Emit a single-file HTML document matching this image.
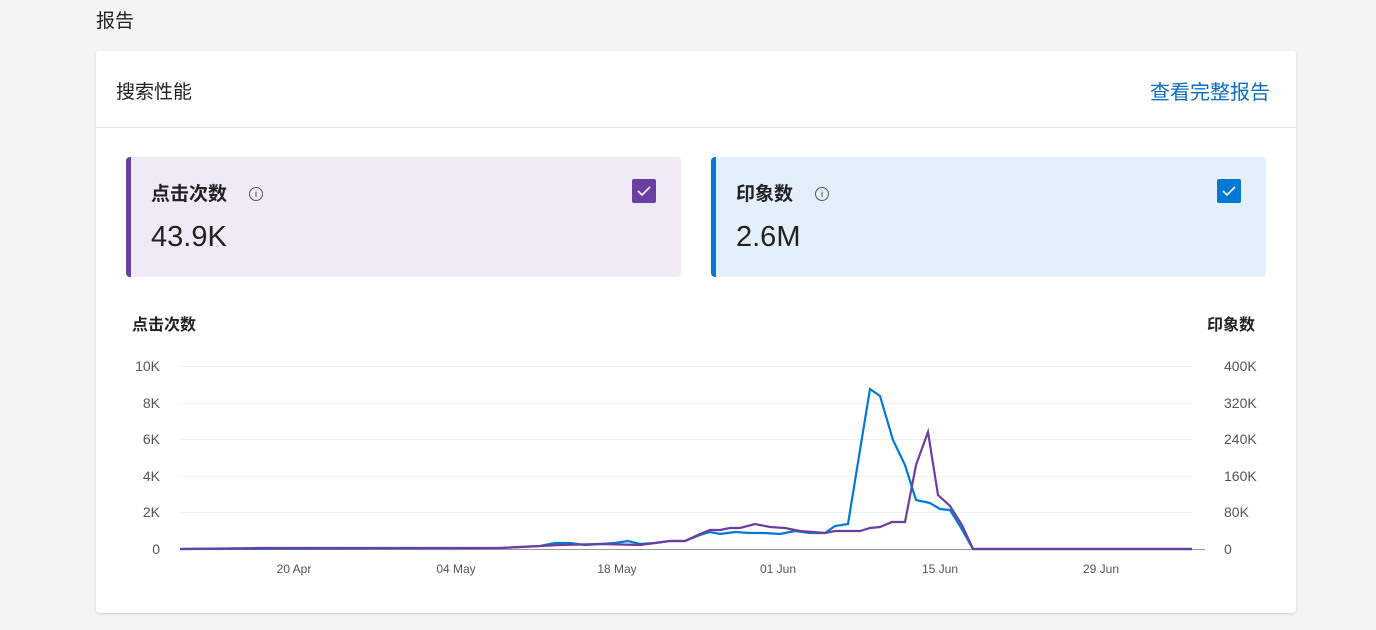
<!DOCTYPE html>
<html><head><meta charset="utf-8"><style>
body{margin:0;width:1376px;height:630px;background:#f4f4f4;font-family:"Liberation Sans","Noto Sans CJK SC",sans-serif;overflow:hidden;position:relative;color:#222}
.t{position:absolute;left:96px;top:6px;font-size:19px;color:#222}
.card{position:absolute;left:96px;top:51px;width:1200px;height:562px;background:#fff;border-radius:3px;box-shadow:0 1px 2px rgba(0,0,0,.15)}
.hd{height:76px;border-bottom:1px solid #e5e5e5;position:relative}
.hd .a{position:absolute;left:20px;top:26px;font-size:19px}
.hd .b{position:absolute;right:26px;top:25px;font-size:20px;color:#0f6cbd}
.m{position:absolute;top:106px;height:120px;border-radius:4px}
.m .l{position:absolute;left:20px;top:22px;font-size:19px;font-weight:bold}
.m .i{display:inline-block;width:12px;height:12px;border:1px solid #555;border-radius:50%;font-size:9px;line-height:12px;text-align:center;margin-left:22px;vertical-align:3px;font-weight:normal}
.m .v{position:absolute;left:20px;top:64px;font-size:29px}
.m .c{position:absolute;right:25px;top:22px;width:24px;height:24px;border-radius:2px}
.ax{position:absolute;font-size:14px;color:#555}
</style></head><body>
<div class="t">报告</div>
<div class="card">
<div class="hd"><span class="a">搜索性能</span><span class="b">查看完整报告</span></div>
<div class="m" style="left:30px;width:550px;background:#f0eaf6;border-left:5px solid #6b3fa0"><div class="l">点击次数<span class="i">i</span></div><div class="v">43.9K</div><div class="c" style="background:#6b3fa0"><svg width="24" height="24"><path d="M6 12l4 4 8-8" stroke="#fff" stroke-width="1.6" fill="none"/></svg></div></div>
<div class="m" style="left:615px;width:550px;background:#e3f0fb;border-left:5px solid #0078d4"><div class="l">印象数<span class="i">i</span></div><div class="v">2.6M</div><div class="c" style="background:#0078d4"><svg width="24" height="24"><path d="M6 12l4 4 8-8" stroke="#fff" stroke-width="1.6" fill="none"/></svg></div></div>
</div>
<div class="ax" style="left:132px;top:311px;font-weight:bold;font-size:16px;color:#222">点击次数</div>
<div class="ax" style="left:1207px;top:311px;font-weight:bold;font-size:16px;color:#222">印象数</div>
<svg style="position:absolute;left:0;top:0" width="1376" height="630">
<g stroke="#f0f0f0" stroke-width="1"><line x1="180" x2="1192" y1="366.5" y2="366.5"/><line x1="180" x2="1192" y1="403.5" y2="403.5"/><line x1="180" x2="1192" y1="439.5" y2="439.5"/><line x1="180" x2="1192" y1="476.5" y2="476.5"/><line x1="180" x2="1192" y1="512.5" y2="512.5"/></g>
<line x1="180" x2="1205" y1="549.5" y2="549.5" stroke="#999"/>
<g font-size="14" fill="#555" font-family="Liberation Sans,sans-serif">
<text x="160" y="371" text-anchor="end">10K</text><text x="160" y="408" text-anchor="end">8K</text><text x="160" y="444" text-anchor="end">6K</text><text x="160" y="481" text-anchor="end">4K</text><text x="160" y="517" text-anchor="end">2K</text><text x="160" y="554" text-anchor="end">0</text>
<text x="1224" y="371">400K</text><text x="1224" y="408">320K</text><text x="1224" y="444">240K</text><text x="1224" y="481">160K</text><text x="1224" y="517">80K</text><text x="1224" y="554">0</text>
</g>
<g font-size="12" fill="#555" font-family="Liberation Sans,sans-serif" text-anchor="middle">
<text x="294" y="573">20 Apr</text><text x="456" y="573">04 May</text><text x="617" y="573">18 May</text><text x="778" y="573">01 Jun</text><text x="940" y="573">15 Jun</text><text x="1101" y="573">29 Jun</text>
</g>
<polyline fill="none" stroke="#0078d4" stroke-width="2.2" points="180,549 500,548 520,547 540,546 555,543 570,543 585,545 600,544 615,543 628,541 640,544 655,543 670,541 685,541 700,535 710,532 720,534 735,532 750,533 765,533 780,534 795,531 810,533 825,533 835,526 848,524 860,450 870,389 880,396 893,440 905,465 916,500 930,503 940,509 950,510 960,526 973,549 1192,549"/>
<polyline fill="none" stroke="#6b3fa0" stroke-width="2.2" points="180,549 260,548 300,548 340,548 400,548 500,548 540,546 560,545 600,544 640,545 670,541 685,541 700,534 710,530 720,530 730,528 740,528 755,524 770,527 785,528 800,531 825,533 835,531 848,531 860,531 870,528 880,527 892,522 905,522 916,465 928,432 938,495 950,506 962,525 973,549 1192,549"/>
</svg>
</body></html>
